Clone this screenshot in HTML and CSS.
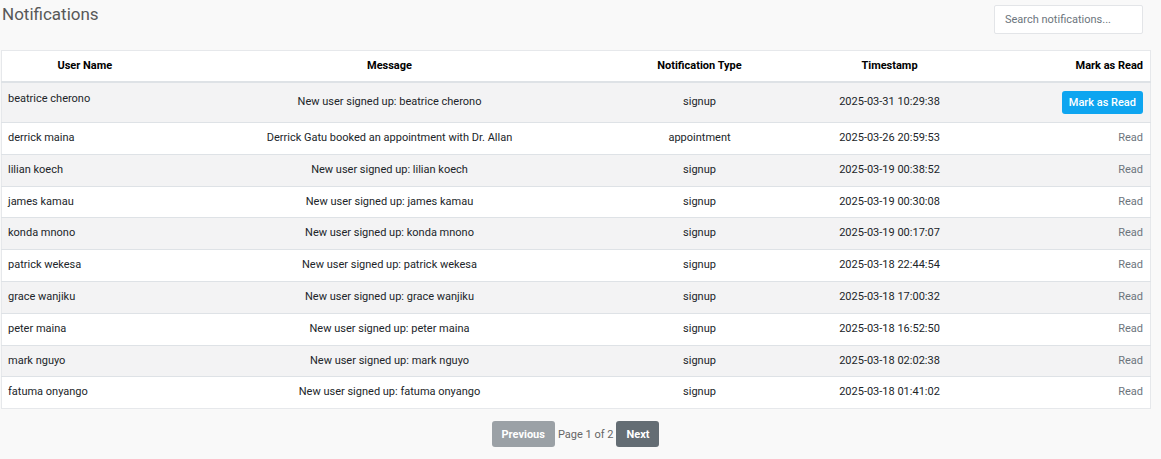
FILE: index.html
```html
<!DOCTYPE html>
<html>
<head>
<meta charset="utf-8">
<link rel="stylesheet" href="styles.css">
</head>
<body>
<div class="page">
  <div class="topbar">
    <h1 class="title">Notifications</h1>
    <input class="search" type="text" placeholder="Search notifications...">
  </div>
  <table class="table">
    <colgroup>
      <col class="c1"><col class="c2"><col class="c3"><col class="c4"><col class="c5">
    </colgroup>
    <thead>
      <tr>
        <th>User Name</th>
        <th>Message</th>
        <th>Notification Type</th>
        <th>Timestamp</th>
        <th class="right">Mark as Read</th>
      </tr>
    </thead>
    <tbody>
      <tr class="first">
        <td class="user top">beatrice cherono</td>
        <td>New user signed up: beatrice cherono</td>
        <td>signup</td>
        <td>2025-03-31 10:29:38</td>
        <td class="right"><button class="mark">Mark as Read</button></td>
      </tr>
      <tr>
        <td class="user">derrick maina</td>
        <td>Derrick Gatu booked an appointment with Dr. Allan</td>
        <td>appointment</td>
        <td>2025-03-26 20:59:53</td>
        <td class="right read">Read</td>
      </tr>
      <tr>
        <td class="user">lilian koech</td>
        <td>New user signed up: lilian koech</td>
        <td>signup</td>
        <td>2025-03-19 00:38:52</td>
        <td class="right read">Read</td>
      </tr>
      <tr>
        <td class="user">james kamau</td>
        <td>New user signed up: james kamau</td>
        <td>signup</td>
        <td>2025-03-19 00:30:08</td>
        <td class="right read">Read</td>
      </tr>
      <tr>
        <td class="user">konda mnono</td>
        <td>New user signed up: konda mnono</td>
        <td>signup</td>
        <td>2025-03-19 00:17:07</td>
        <td class="right read">Read</td>
      </tr>
      <tr>
        <td class="user">patrick wekesa</td>
        <td>New user signed up: patrick wekesa</td>
        <td>signup</td>
        <td>2025-03-18 22:44:54</td>
        <td class="right read">Read</td>
      </tr>
      <tr>
        <td class="user">grace wanjiku</td>
        <td>New user signed up: grace wanjiku</td>
        <td>signup</td>
        <td>2025-03-18 17:00:32</td>
        <td class="right read">Read</td>
      </tr>
      <tr>
        <td class="user">peter maina</td>
        <td>New user signed up: peter maina</td>
        <td>signup</td>
        <td>2025-03-18 16:52:50</td>
        <td class="right read">Read</td>
      </tr>
      <tr>
        <td class="user">mark nguyo</td>
        <td>New user signed up: mark nguyo</td>
        <td>signup</td>
        <td>2025-03-18 02:02:38</td>
        <td class="right read">Read</td>
      </tr>
      <tr>
        <td class="user">fatuma onyango</td>
        <td>New user signed up: fatuma onyango</td>
        <td>signup</td>
        <td>2025-03-18 01:41:02</td>
        <td class="right read">Read</td>
      </tr>
    </tbody>
  </table>
  <div class="pager">
    <button class="pbtn prev">Previous</button>
    <span class="pinfo">Page 1 of 2</span>
    <button class="pbtn next">Next</button>
  </div>
</div>
</body>
</html>
```
FILE: styles.css
```css
html, body {
  margin: 0;
  padding: 0;
  background: #f9f9f9;
  font-family: Roboto, "Noto Sans", sans-serif;
  color: #212529;
}
.page {
  width: 1149px;
  margin-left: 1px;
}
.topbar {
  display: flex;
  justify-content: space-between;
  align-items: flex-start;
  height: 50px;
  padding-right: 7px;
}
.title {
  margin: 3px 0 0 1px;
  font-size: 17px;
  font-weight: 400;
  color: #585858;
  line-height: 22px;
}
.search {
  margin-top: 5px;
  width: 149px;
  height: 29px;
  box-sizing: border-box;
  border: 1px solid #e3e5e8;
  border-radius: 2px;
  background: #fff;
  padding: 0 10px;
  font-family: inherit;
  font-size: 11px;
  color: #333;
  outline: none;
}
.search::placeholder { color: #6c757d; }
.table {
  width: 100%;
  border-collapse: collapse;
  table-layout: fixed;
  background: #fff;
  border: 1px solid #e6e8eb;
  font-size: 11px;
}
.c1 { width: 166px; }
.c2 { width: 444px; }
.c3 { width: 176px; }
.c4 { width: 204px; }
.c5 { width: 159px; }
th {
  font-weight: 700;
  color: #000;
  text-align: center;
  padding: 8px 8px;
  line-height: 14px;
  border-bottom: 2px solid #dee2e6;
}
td {
  text-align: center;
  vertical-align: middle;
  padding: 8px 8px;
  line-height: 14.8px;
  border-top: 1px solid #dee2e6;
  color: #212529;
}
tbody tr:nth-child(odd) { background: #f3f3f4; }
td.user { text-align: left; padding-left: 6px; }
td.top { vertical-align: top; padding-top: 9px; }
.right, th.right { text-align: right; padding-right: 7px; }
.read { color: #6c757d; }
.mark {
  display: inline-block;
  vertical-align: top;
  background: #0ea5f0;
  color: #fff;
  border: none;
  border-radius: 3px;
  font-family: inherit;
  font-size: 11px;
  font-weight: 500;
  height: 23px;
  padding: 0 7px;
  line-height: 23px;
}
.pager {
  display: flex;
  justify-content: center;
  align-items: center;
  gap: 3px;
  margin-top: 12px;
}
.pbtn {
  border: none;
  border-radius: 3px;
  color: #fff;
  font-family: inherit;
  font-size: 11px;
  font-weight: 700;
  height: 26px;
  padding: 0 10px;
}
.prev { background: #9ba1a6; }
.next { background: #646d74; }
.pinfo { font-size: 11px; color: #666; }
```
